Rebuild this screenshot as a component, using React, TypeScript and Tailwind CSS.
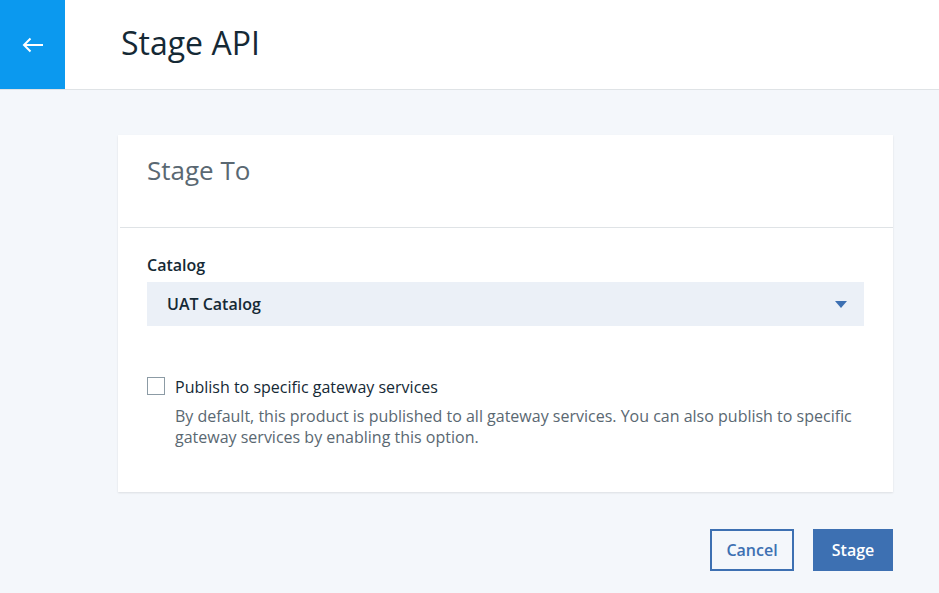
import React, { useState } from 'react';

const BackArrow: React.FC = () => (
  <svg width="22" height="16" viewBox="0 0 22 16" fill="none">
    <path d="M21 8H2M8.5 1.5L2 8l6.5 6.5" stroke="white" strokeWidth="2" />
  </svg>
);

const Caret: React.FC = () => (
  <svg width="12" height="7" viewBox="0 0 12 7">
    <path d="M0 0h12L6 7z" fill="#3d70b2" />
  </svg>
);

const App: React.FC = () => {
  const [checked, setChecked] = useState(false);

  return (
    <div
      className="min-h-[593px] bg-[#f4f7fb] text-[#152935]"
      style={{ fontFamily: '"Open Sans", "Noto Sans", sans-serif' }}
    >
      <header className="h-[90px] bg-white border-b border-[#dfe3e6] flex items-stretch">
        <button className="w-[65px] bg-[#0b99ef] flex items-center justify-center">
          <BackArrow />
        </button>
        <h1 className="ml-[56px] self-center text-[32px] font-normal text-[#152935] -mt-[4px]">Stage API</h1>
      </header>

      <main className="pl-[118px] pr-[46px] pt-[45px]">
        <section className="bg-white shadow-[0_1px_2px_rgba(0,0,0,0.1)]">
          <div className="h-[93px] px-[29px] pt-[16px] border-b border-[#dfe3e6] ml-[2px]">
            <h2 className="text-[26px] font-normal text-[#5a6872] -ml-[2px]">Stage To</h2>
          </div>

          <div className="px-[29px] pt-[25px] pb-[44px]">
            <label className="block text-[16px] font-semibold mb-[5px]">Catalog</label>
            <div className="h-[44px] bg-[#ebf0f7] flex items-center justify-between pl-[20px] pr-[17px]">
              <span className="text-[16px] font-semibold">UAT Catalog</span>
              <Caret />
            </div>

            <div className="mt-[50px] flex gap-[10px]">
              <button
                onClick={() => setChecked(!checked)}
                className="w-[18px] h-[18px] mt-[1px] border border-[#8c9ba5] bg-white shrink-0"
              />
              <div>
                <div className="text-[16px] leading-[22px]">Publish to specific gateway services</div>
                <p className="mt-[8px] text-[16px] leading-[21px] text-[#5a6872] max-w-[700px]">
                  By default, this product is published to all gateway services. You can also publish to specific gateway services by enabling this option.
                </p>
              </div>
            </div>
          </div>
        </section>

        <div className="flex justify-end gap-[19px] mt-[37px]">
          <button className="w-[84px] h-[42px] border-2 border-[#3d70b2] text-[#3d70b2] text-[16px] font-semibold bg-transparent">
            Cancel
          </button>
          <button className="w-[80px] h-[42px] bg-[#3d70b2] text-white text-[16px] font-semibold">
            Stage
          </button>
        </div>
      </main>
    </div>
  );
};

export default App;
